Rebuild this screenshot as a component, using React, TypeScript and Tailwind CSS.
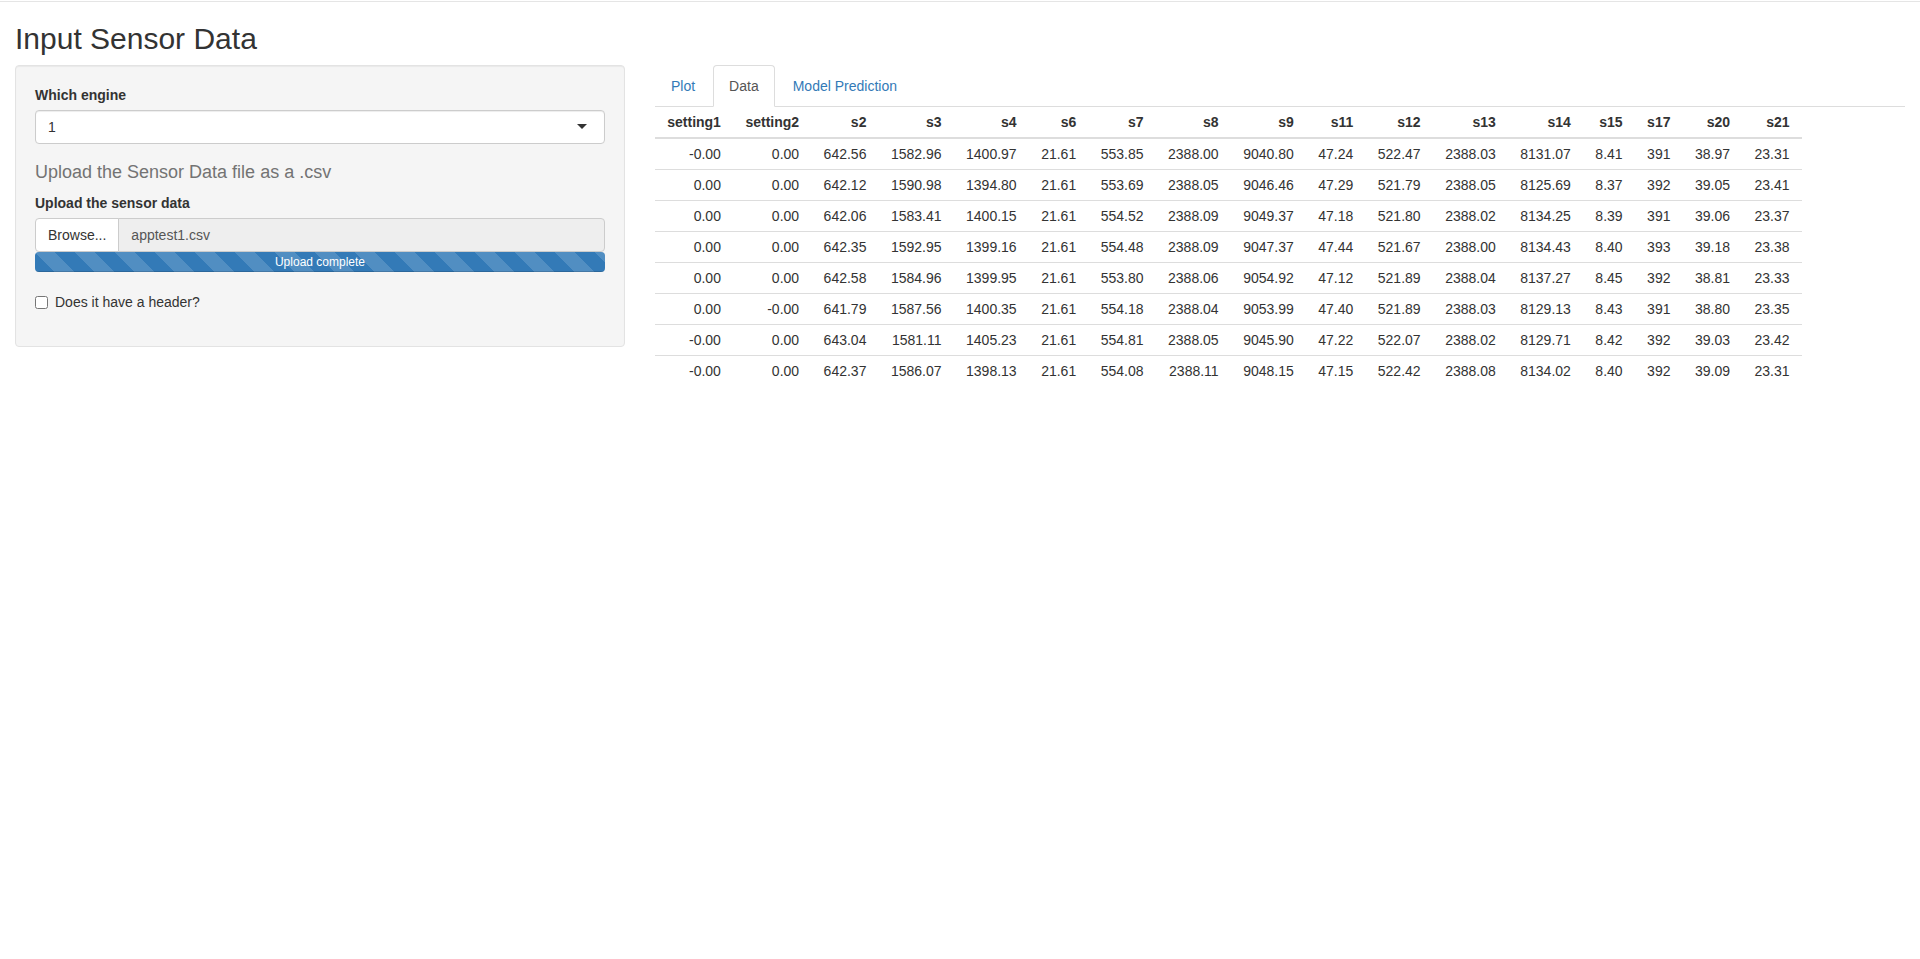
const columns = [
  'setting1', 'setting2', 's2', 's3', 's4', 's6', 's7', 's8', 's9',
  's11', 's12', 's13', 's14', 's15', 's17', 's20', 's21',
];

const rows = [
  ['-0.00', '0.00', '642.56', '1582.96', '1400.97', '21.61', '553.85', '2388.00', '9040.80', '47.24', '522.47', '2388.03', '8131.07', '8.41', '391', '38.97', '23.31'],
  ['0.00', '0.00', '642.12', '1590.98', '1394.80', '21.61', '553.69', '2388.05', '9046.46', '47.29', '521.79', '2388.05', '8125.69', '8.37', '392', '39.05', '23.41'],
  ['0.00', '0.00', '642.06', '1583.41', '1400.15', '21.61', '554.52', '2388.09', '9049.37', '47.18', '521.80', '2388.02', '8134.25', '8.39', '391', '39.06', '23.37'],
  ['0.00', '0.00', '642.35', '1592.95', '1399.16', '21.61', '554.48', '2388.09', '9047.37', '47.44', '521.67', '2388.00', '8134.43', '8.40', '393', '39.18', '23.38'],
  ['0.00', '0.00', '642.58', '1584.96', '1399.95', '21.61', '553.80', '2388.06', '9054.92', '47.12', '521.89', '2388.04', '8137.27', '8.45', '392', '38.81', '23.33'],
  ['0.00', '-0.00', '641.79', '1587.56', '1400.35', '21.61', '554.18', '2388.04', '9053.99', '47.40', '521.89', '2388.03', '8129.13', '8.43', '391', '38.80', '23.35'],
  ['-0.00', '0.00', '643.04', '1581.11', '1405.23', '21.61', '554.81', '2388.05', '9045.90', '47.22', '522.07', '2388.02', '8129.71', '8.42', '392', '39.03', '23.42'],
  ['-0.00', '0.00', '642.37', '1586.07', '1398.13', '21.61', '554.08', '2388.11', '9048.15', '47.15', '522.42', '2388.08', '8134.02', '8.40', '392', '39.09', '23.31'],
];

const tabs = ['Plot', 'Data', 'Model Prediction'];

function Sidebar() {
  return (
    <div className="bg-[#f5f5f5] border border-[#e3e3e3] rounded-[4px] p-[19px] shadow-[inset_0_1px_1px_rgba(0,0,0,0.05)]">
      <label className="block font-bold mb-[5px]">Which engine</label>
      <div className="relative h-[34px] bg-white border border-[#ccc] rounded-[4px] px-[12px] py-[6px] shadow-[inset_0_1px_1px_rgba(0,0,0,0.075)]">
        <span>1</span>
        <span className="absolute right-[17px] top-1/2 -mt-[3px] w-0 h-0 border-x-[5px] border-t-[5px] border-x-transparent border-t-[#333]" />
      </div>

      <h4 className="mt-[18px] mb-[11px] text-[18px] leading-[20px] text-[#737373] font-normal">
        Upload the Sensor Data file as a .csv
      </h4>

      <label className="block font-bold mb-[5px]">Upload the sensor data</label>
      <div className="flex h-[34px]">
        <span className="px-[12px] py-[6px] bg-white border border-[#ccc] rounded-l-[4px] text-[#333]">
          Browse...
        </span>
        <span className="flex-1 -ml-px px-[12px] py-[6px] bg-[#eee] border border-[#ccc] rounded-r-[4px] text-[#555]">
          apptest1.csv
        </span>
      </div>
      <div className="h-[20px] bg-[#f5f5f5] rounded-[4px] overflow-hidden">
        <div className="h-full w-full bg-[#337ab7] bg-[linear-gradient(45deg,rgba(255,255,255,0.15)_25%,transparent_25%,transparent_50%,rgba(255,255,255,0.15)_50%,rgba(255,255,255,0.15)_75%,transparent_75%,transparent)] bg-[length:40px_40px] text-white text-[12px] leading-[20px] text-center shadow-[inset_0_-1px_0_rgba(0,0,0,0.15)]">
          Upload complete
        </div>
      </div>

      <label className="flex items-start mt-[20px] mb-[15px]">
        <input type="checkbox" className="m-0 mt-[4px] mr-[7px] w-[13px] h-[13px]" />
        <span>Does it have a header?</span>
      </label>
    </div>
  );
}

function DataTable() {
  return (
    <table className="border-collapse mb-[20px]">
      <thead>
        <tr>
          {columns.map((c) => (
            <th
              key={c}
              className="text-right font-bold px-[12.25px] py-[5px] border-b-2 border-[#ddd]"
            >
              {c}
            </th>
          ))}
        </tr>
      </thead>
      <tbody>
        {rows.map((r, i) => (
          <tr key={i}>
            {r.map((v, j) => (
              <td key={j} className="text-right px-[12.25px] py-[5px] border-t border-[#ddd]">
                {v}
              </td>
            ))}
          </tr>
        ))}
      </tbody>
    </table>
  );
}

export default function App() {
  return (
    <div className="min-h-screen bg-white text-[#333] text-[14px] leading-[20px] font-['Liberation_Sans',Arial,sans-serif]">
      <div className="h-[2px] border-b border-[#e5e5e5]" />
      <div className="px-[15px]">
        <h2 className="mt-[20px] mb-[10px] text-[30px] leading-[33px] font-normal">Input Sensor Data</h2>
        <div className="flex -mx-[15px]">
          <div className="w-1/3 px-[15px]">
            <Sidebar />
          </div>
          <div className="w-2/3 px-[15px]">
            <ul className="flex border-b border-[#ddd]">
              {tabs.map((t) => (
                <li key={t} className="-mb-px mr-[2px]">
                  <a
                    className={
                      t === 'Data'
                        ? 'block px-[15px] py-[10px] border border-[#ddd] border-b-transparent rounded-t-[4px] bg-white text-[#555]'
                        : 'block px-[15px] py-[10px] border border-transparent rounded-t-[4px] text-[#337ab7]'
                    }
                  >
                    {t}
                  </a>
                </li>
              ))}
            </ul>
            <DataTable />
          </div>
        </div>
      </div>
    </div>
  );
}
